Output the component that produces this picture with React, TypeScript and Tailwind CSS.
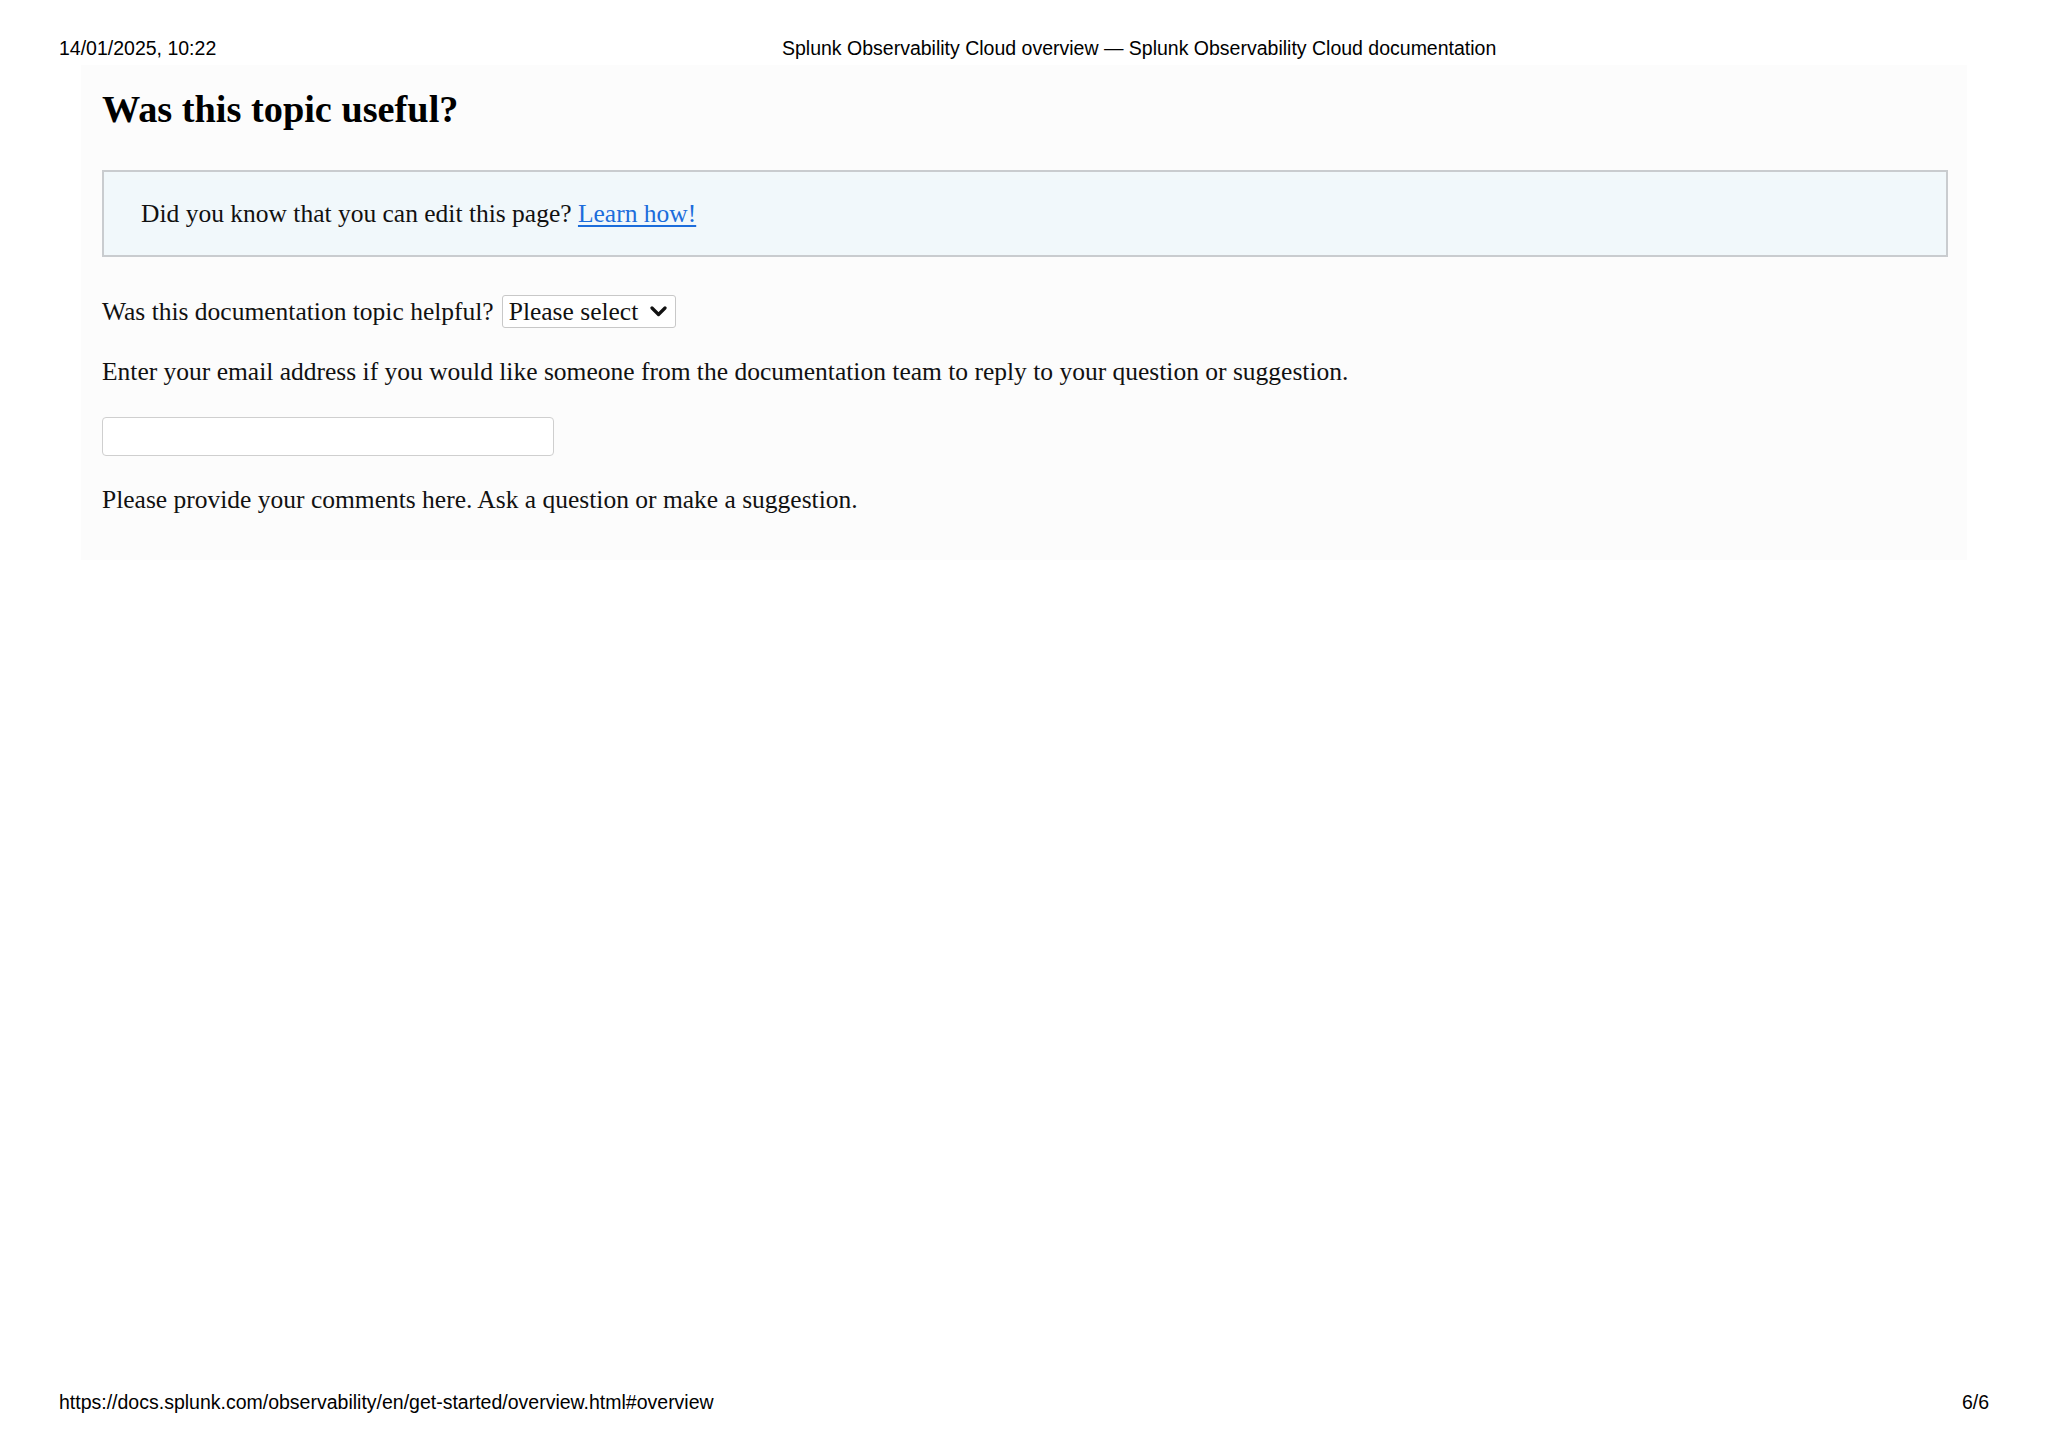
import * as React from 'react';

function ChevronDown() {
	return (
		<svg width="17" height="11" viewBox="0 0 17 11" className="pointer-events-none absolute right-[9px] top-[11px]">
			<path d="M2 2 L8.5 8.5 L15 2" fill="none" stroke="#111" strokeWidth="3.2" strokeLinecap="round" strokeLinejoin="round" />
		</svg>
	);
}

function FeedbackPanel() {
	return (
		<div className="mx-[81px] mt-[6px] bg-[#fcfcfc] pl-[21px] pr-[19px] pt-[23px] pb-[46px] font-['Liberation_Serif',serif] text-[25.5px] leading-[29px] text-[#111]">
			<h2 className="text-[38.3px] leading-[43px] font-bold text-black">Was this topic useful?</h2>

			<div className="mt-[39px] border-2 border-[#c9cccf] bg-[#f1f8fb] pl-[37px] pt-[27px] pb-[27px]">
				Did you know that you can edit this page?{' '}
				<a href="#" className="text-[#1c6ddb] underline underline-offset-[3px]">
					Learn how!
				</a>
			</div>

			<div className="mt-[38px] flex items-center gap-[8px]">
				<span>Was this documentation topic helpful?</span>
				<div className="relative">
					<select
						defaultValue=""
						className="h-[33px] w-[174px] appearance-none rounded-[3px] border border-[#c8c8c8] bg-white pl-[6px] font-['Liberation_Serif',serif] text-[25.5px] leading-[29px] text-[#111]"
					>
						<option value="">Please select</option>
						<option value="yes">Yes</option>
						<option value="no">No</option>
					</select>
					<ChevronDown />
				</div>
			</div>

			<p className="mt-[29px]">
				Enter your email address if you would like someone from the documentation team to reply to your question or suggestion.
			</p>

			<input
				type="email"
				className="mt-[31px] block h-[39px] w-[452px] rounded-[4px] border border-[#cfcfcf] bg-white"
			/>

			<p className="mt-[29px]">Please provide your comments here. Ask a question or make a suggestion.</p>
		</div>
	);
}

export default function App() {
	return (
		<div className="flex h-[1447px] flex-col bg-white font-['Liberation_Sans',Arial,sans-serif] text-[19.5px] leading-[22px] text-black">
			{/* print header */}
			<div className="flex pl-[59px] pt-[37px]">
				<span className="w-[723px]">14/01/2025, 10:22</span>
				<span>Splunk Observability Cloud overview — Splunk Observability Cloud documentation</span>
			</div>

			<FeedbackPanel />

			{/* print footer */}
			<div className="mt-auto flex justify-between px-[59px] pb-[34px]">
				<span>https://docs.splunk.com/observability/en/get-started/overview.html#overview</span>
				<span>6/6</span>
			</div>
		</div>
	);
}
